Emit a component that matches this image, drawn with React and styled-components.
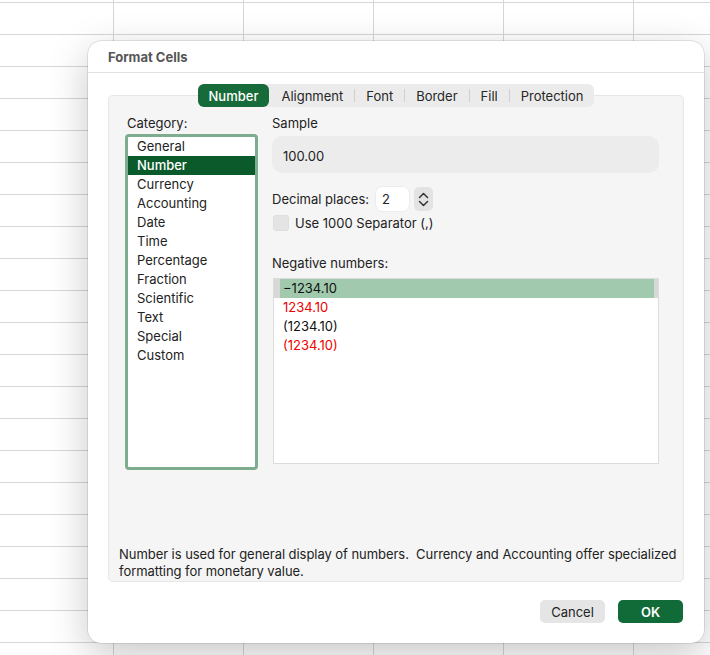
import React, { useState } from 'react'
import styled, { createGlobalStyle } from 'styled-components'

const GlobalStyle = createGlobalStyle`
  *, *::before, *::after {
    box-sizing: border-box;
  }
  html, body {
    margin: 0;
    height: 100%;
  }
  body {
    font-family: Inter, "Noto Sans", "Liberation Sans", sans-serif;
    background-color: #fff;
    background-image:
      linear-gradient(to right, #d6d6d6 1px, transparent 1px),
      linear-gradient(to bottom, #d6d6d6 1px, transparent 1px);
    background-size: 130px 32px;
    background-position: 113px 2px;
    overflow: hidden;
  }
`

const categories = ['General', 'Number', 'Currency', 'Accounting', 'Date', 'Time', 'Percentage', 'Fraction', 'Scientific', 'Text', 'Special', 'Custom']
const tabs = ['Number', 'Alignment', 'Font', 'Border', 'Fill', 'Protection']
const negatives = [
  { label: '\u22121234.10', red: false },
  { label: '1234.10', red: true },
  { label: '(1234.10)', red: false },
  { label: '(1234.10)', red: true },
]

// modal sits over the spreadsheet grid
const Dialog = styled.div`
  position: absolute;
  left: 88px;
  top: 41px;
  width: 616px;
  height: 602px;
  background: #fff;
  border-radius: 13px;
  box-shadow: 0 12px 40px rgba(0, 0, 0, 0.22), 0 0 0 0.5px rgba(0, 0, 0, 0.18);
  display: flex;
  flex-direction: column;
  font-size: 13px;
  color: #222;
`

const TitleBar = styled.div`
  height: 32px;
  display: flex;
  align-items: center;
  padding: 1px 20px 0;
  border-bottom: 1px solid #e2e2e2;
  font-weight: 700;
  color: #555;
  font-size: 13px;
`

const Body = styled.div`
  padding: 11px 20px 0;
  display: flex;
  flex-direction: column;
`

const TabsRow = styled.div`
  display: flex;
  justify-content: center;
  margin-bottom: -12px;
  position: relative;
  z-index: 1;
`

const TabBar = styled.div`
  display: flex;
  align-items: center;
  height: 23px;
  background: #ebebeb;
  border-radius: 6px;
`

const Tab = styled.div`
  height: 23px;
  display: flex;
  align-items: center;
  padding: 0 11px;
  border-radius: 6px;
  color: ${(p) => (p.$active ? '#fff' : '#262626')};
  background: ${(p) => (p.$active ? '#176b3a' : 'transparent')};
  font-weight: ${(p) => (p.$active ? 500 : 400)};
`

const TabSep = styled.span`
  width: 1px;
  height: 13px;
  background: ${(p) => (p.$hidden ? 'transparent' : '#cfcfcf')};
`

const Panel = styled.div`
  height: 487px;
  background: #f5f5f5;
  border: 1px solid #e6e6e6;
  border-radius: 5px;
  padding: 19px 24px 0 16px;
  display: flex;
  flex-direction: column;
`

const Columns = styled.div`
  display: flex;
  gap: 14px;
`

const LeftCol = styled.div`
  width: 133px;
  display: flex;
  flex-direction: column;
`

const RightCol = styled.div`
  flex: 1;
  display: flex;
  flex-direction: column;
`

const Label = styled.div`
  line-height: 16px;
  padding-left: ${(p) => p.$indent || 0}px;
`

const CategoryList = styled.div`
  margin-top: 3px;
  height: 336px;
  border: 3.5px solid #7dac8e;
  border-radius: 4px;
  background: #fff;
`

const CategoryItem = styled.div`
  height: 19px;
  line-height: 19px;
  padding-left: 9px;
  background: ${(p) => (p.$selected ? '#0b5a2b' : 'transparent')};
  color: ${(p) => (p.$selected ? '#fff' : '#222')};
  font-weight: ${(p) => (p.$selected ? 500 : 400)};
`

const SampleBox = styled.div`
  margin-top: 5px;
  height: 37px;
  border-radius: 10px;
  background: #ececec;
  display: flex;
  align-items: center;
  padding: 2px 11px 0;
`

const DecimalRow = styled.div`
  margin-top: 14px;
  display: flex;
  align-items: center;
  height: 24px;
`

const NumberInput = styled.input`
  margin-left: 7px;
  width: 33px;
  height: 24px;
  border: none;
  border-radius: 6px;
  background: #fff;
  padding: 0 6px;
  font: inherit;
  color: #222;
  outline: none;
  box-shadow: 0 0 0 0.5px #e3e3e3;
`

const Stepper = styled.div`
  margin-left: 5px;
  width: 19px;
  height: 24px;
  border-radius: 5px;
  background: #e3e3e3;
  display: flex;
  flex-direction: column;
  align-items: center;
  justify-content: center;
  gap: 1px;
`

const CheckRow = styled.label`
  margin-top: 4px;
  display: flex;
  align-items: center;
  gap: 6px;
  height: 16px;
  padding-left: 1px;
`

const CheckBox = styled.span`
  width: 16px;
  height: 16px;
  border-radius: 4px;
  background: #e4e4e4;
  box-shadow: inset 0 0 0 0.5px #dadada;
`

const NegLabel = styled(Label)`
  margin-top: 24px;
`

const NegList = styled.div`
  margin-top: 7px;
  margin-left: 1px;
  width: 386px;
  height: 186px;
  border: 1px solid #dcdcdc;
  background: #fff;
`

const NegItem = styled.div`
  height: 19px;
  line-height: 19px;
  padding-left: ${(p) => (p.$selected ? 3 : 9)}px;
  color: ${(p) => (p.$red ? '#f00000' : '#111')};
  background: ${(p) => (p.$selected ? '#a0c9ae' : 'transparent')};
  border-left: ${(p) => (p.$selected ? '6px solid #d8d8d8' : 'none')};
  border-right: ${(p) => (p.$selected ? '4px solid #d8d8d8' : 'none')};
`

const Description = styled.div`
  margin-top: auto;
  margin-left: -6px;
  margin-right: -24px;
  line-height: 17px;
  padding-bottom: 1px;
  letter-spacing: -0.05px;
  color: #222;
`

const Footer = styled.div`
  display: flex;
  justify-content: flex-end;
  gap: 13px;
  padding: 18px 21px 0;
`

const Button = styled.button`
  width: 65px;
  height: 23px;
  border: none;
  border-radius: 5px;
  font: inherit;
  font-size: 13px;
  cursor: pointer;
  background: ${(p) => (p.$primary ? '#116b39' : '#e5e5e5')};
  color: ${(p) => (p.$primary ? '#fff' : '#222')};
  font-weight: ${(p) => (p.$primary ? 600 : 400)};
`

const Chevron = ({ up }) => (
  <svg width="11" height="7" viewBox="0 0 11 7">
    <path
      d={up ? 'M1.5 5.5 L5.5 1.5 L9.5 5.5' : 'M1.5 1.5 L5.5 5.5 L9.5 1.5'}
      fill="none"
      stroke="#333"
      strokeWidth="1.5"
      strokeLinecap="round"
      strokeLinejoin="round"
    />
  </svg>
)

const App = () => {
  const [category, setCategory] = useState('Number')
  const [negative, setNegative] = useState(0)
  const activeIdx = 0

  return (
    <>
      <GlobalStyle />
      <Dialog>
        <TitleBar>Format Cells</TitleBar>
        <Body>
          <TabsRow>
            <TabBar>
              {tabs.map((t, i) => (
                <React.Fragment key={t}>
                  {i > 0 && <TabSep $hidden={i === activeIdx + 1} />}
                  <Tab $active={i === activeIdx}>{t}</Tab>
                </React.Fragment>
              ))}
            </TabBar>
          </TabsRow>
          <Panel>
            <Columns>
              <LeftCol>
                <Label $indent={2}>Category:</Label>
                <CategoryList>
                  {categories.map((c) => (
                    <CategoryItem key={c} $selected={c === category} onClick={() => setCategory(c)}>
                      {c}
                    </CategoryItem>
                  ))}
                </CategoryList>
              </LeftCol>
              <RightCol>
                <Label>Sample</Label>
                <SampleBox>100.00</SampleBox>
                <DecimalRow>
                  <span>Decimal places:</span>
                  <NumberInput defaultValue="2" />
                  <Stepper>
                    <Chevron up />
                    <Chevron />
                  </Stepper>
                </DecimalRow>
                <CheckRow>
                  <CheckBox />
                  <span>Use 1000 Separator (,)</span>
                </CheckRow>
                <NegLabel>Negative numbers:</NegLabel>
                <NegList>
                  {negatives.map((n, i) => (
                    <NegItem key={i} $red={n.red} $selected={i === negative} onClick={() => setNegative(i)}>
                      {n.label}
                    </NegItem>
                  ))}
                </NegList>
              </RightCol>
            </Columns>
            <Description>
              Number is used for general display of numbers.&nbsp; Currency and Accounting offer specialized formatting for monetary value.
            </Description>
          </Panel>
        </Body>
        <Footer>
          <Button>Cancel</Button>
          <Button $primary>OK</Button>
        </Footer>
      </Dialog>
    </>
  )
}

export default App
